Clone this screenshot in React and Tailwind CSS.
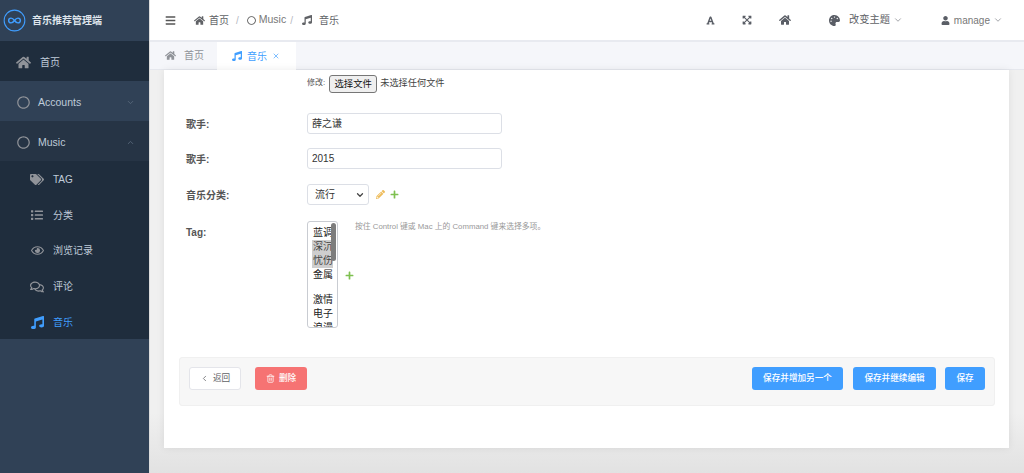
import React from "react";
import {
  FaBars,
  FaExpandArrowsAlt,
  FaFont,
  FaHome,
  FaList,
  FaMusic,
  FaPalette,
  FaPencilAlt,
  FaPlus,
  FaRegCircle,
  FaRegComments,
  FaRegEye,
  FaTags,
  FaUser,
} from "react-icons/fa";
import { ChevronDown, ChevronLeft, ChevronUp, Trash2, X } from "lucide-react";

const font = "font-['Liberation_Sans','Noto_Sans_CJK_SC',sans-serif]";

function Logo() {
  return (
    <svg viewBox="0 0 24 24" className="w-[23px] h-[23px]" fill="none">
      <circle cx="12" cy="12" r="10.8" stroke="#409eff" strokeWidth="1.1" />
      <path
        d="M12 12c-1.2-1.7-2.3-2.5-3.6-2.5a2.5 2.5 0 0 0 0 5c1.3 0 2.4-.8 3.6-2.5s2.3-2.5 3.6-2.5a2.5 2.5 0 0 1 0 5c-1.3 0-2.4-.8-3.6-2.5z"
        stroke="#409eff"
        strokeWidth="1.5"
      />
    </svg>
  );
}

function MenuRow({ icon, label, className, arrow }) {
  return (
    <div className={`h-10 flex items-center pt-[3px] pl-[16px] pr-[14px] ${className}`}>
      <span className="w-[14px] flex justify-center text-[#909399]">{icon}</span>
      <span className="ml-[8px] text-[10.5px] text-[#bfcbd9]">{label}</span>
      {arrow && <span className="ml-auto text-[#5f6f82]">{arrow}</span>}
    </div>
  );
}

function SubRow({ icon, label, active }) {
  return (
    <div className="h-[35.6px] flex items-center pt-[2px] pl-[30px]">
      <span className={`w-[14px] flex justify-center ${active ? "text-[#409eff]" : "text-[#909399]"}`}>
        {icon}
      </span>
      <span className={`ml-[9px] text-[10px] ${active ? "text-[#409eff]" : "text-[#bfcbd9]"}`}>{label}</span>
    </div>
  );
}

function Sidebar() {
  return (
    <div className="w-[149px] shrink-0 h-full bg-[#304156] flex flex-col">
      <div className="h-[41px] flex items-center pl-[3px]">
        <Logo />
        <span className="ml-[6px] text-[10px] font-bold text-[#dfe5ec]">音乐推荐管理端</span>
      </div>
      <div className="h-10 flex items-center pt-[2px] pl-[16px] bg-[#1f2d3d]">
        <FaHome className="text-[15px] text-[#909399]" />
        <span className="ml-[9px] text-[10px] text-[#bfcbd9]">首页</span>
      </div>
      <MenuRow
        icon={<FaRegCircle className="text-[13px]" />}
        label="Accounts"
        arrow={<ChevronDown size={9} />}
      />
      <MenuRow
        icon={<FaRegCircle className="text-[13px]" />}
        label="Music"
        className="bg-[#263445]"
        arrow={<ChevronUp size={9} />}
      />
      <div className="bg-[#1f2d3d] h-[178px]">
        <SubRow icon={<FaTags className="text-[15px]" />} label="TAG" />
        <SubRow icon={<FaList className="text-[12px]" />} label="分类" />
        <SubRow icon={<FaRegEye className="text-[13px]" />} label="浏览记录" />
        <SubRow icon={<FaRegComments className="text-[14px]" />} label="评论" />
        <SubRow icon={<FaMusic className="text-[13px]" />} label="音乐" active />
      </div>
    </div>
  );
}

function TopBar() {
  return (
    <div className="h-[42px] shrink-0 bg-white border-b-2 border-[#e8eaf0] flex items-center text-[10px] text-[#606266]">
      <FaBars className="ml-[15px] text-[11px] text-[#555]" />
      <FaHome className="ml-[18px] text-[11px] text-[#606266]" />
      <span className="ml-[4px]">首页</span>
      <span className="ml-[7px] text-[#b5b8bf]">/</span>
      <FaRegCircle className="ml-[8px] text-[9px] text-[#555]" />
      <span className="ml-[3px] text-[10.5px] text-[#777]">Music</span>
      <span className="ml-[4px] text-[#b5b8bf]">/</span>
      <FaMusic className="ml-[9px] text-[10px] text-[#606266]" />
      <span className="ml-[7px]">音乐</span>

      <FaFont className="ml-auto text-[9px] text-[#5a5e66]" />
      <FaExpandArrowsAlt className="ml-[27px] text-[10px] text-[#5a5e66]" />
      <FaHome className="ml-[27px] text-[12px] text-[#5a5e66]" />
      <FaPalette className="ml-[38px] text-[11px] text-[#5a5e66]" />
      <span className="ml-[9px] text-[10.2px]">改变主题</span>
      <ChevronDown size={10} className="ml-[3px] text-[#909399]" />
      <FaUser className="ml-[38px] text-[9px] text-[#5a5e66]" />
      <span className="ml-[4px] text-[#777]">manage</span>
      <ChevronDown size={10} className="ml-[3px] mr-[21px] text-[#909399]" />
    </div>
  );
}

function Tabs() {
  return (
    <div className="h-[28px] shrink-0 bg-[#f5f6fa] border-b border-[#e6e8ee] flex text-[10px]">
      <div className="w-[67px] flex items-center pl-[15px] text-[#909399]">
        <FaHome className="text-[11px]" />
        <span className="ml-[8px]">首页</span>
      </div>
      <div className="w-[79px] h-[28px] bg-white flex items-center pl-[15px] text-[#409eff]">
        <FaMusic className="text-[10px]" />
        <span className="ml-[5px]">音乐</span>
        <X size={8} className="ml-[5px]" />
      </div>
    </div>
  );
}

function Row({ label, className, children }) {
  return (
    <div className={`flex pl-[22px] ${className}`}>
      <label className="w-[121px] h-[21px] text-[10px] font-bold text-[#555] leading-[23px]">{label}</label>
      {children}
    </div>
  );
}

function TextBox({ value }) {
  return (
    <div className="w-[195px] h-[21px] bg-white border border-[#dcdfe6] rounded-[3px] pl-[4px] text-[10px] leading-[19px] text-[#333]">
      {value}
    </div>
  );
}

function TagOptions() {
  return (
    <div className="relative w-[31px] h-[107px] bg-white border border-[#c9ccd2] rounded-[3px] overflow-hidden text-[10px] text-[#222] pt-[1px]">
      <div className="pl-[5px] h-[14px] leading-[14px] mt-[3px]">蓝调</div>
      <div className="ml-[4px] w-[21px] bg-[#cecece] text-[#444]">
        <div className="pl-[1px] h-[14px] leading-[14px]">深沉</div>
        <div className="pl-[1px] h-[14px] leading-[14px]">忧伤</div>
      </div>
      <div className="pl-[5px] h-[14px] leading-[14px]">金属</div>
      <div className="pl-[5px] h-[14px] leading-[14px] mt-[11px]">激情</div>
      <div className="pl-[5px] h-[14px] leading-[14px]">电子</div>
      <div className="pl-[5px] h-[14px] leading-[14px]">浪漫</div>
      <div className="absolute right-[1px] top-[1px] w-[5px] h-[38px] rounded-full bg-[#7d7d7d]" />
    </div>
  );
}

function Actions() {
  return (
    <div className="h-[49px] ml-[15px] mr-[14px] mt-[29px] bg-[#f7f7f7] border border-[#f0f0f0] rounded-[3px] flex items-start pt-[9px] pl-[9px] pr-[9px] text-[8.6px]">
      <button className="w-[52px] h-[23px] bg-white border border-[#e4e5ea] rounded-[3px] flex items-center justify-center text-[#606266]">
        <ChevronLeft size={9} className="mr-[4px]" />
        返回
      </button>
      <button className="w-[52px] h-[23px] ml-[14px] bg-[#f56c6c]/95 rounded-[3px] flex items-center justify-center text-white font-medium">
        <Trash2 size={9} className="mr-[4px]" />
        删除
      </button>
      <button className="w-[91px] h-[23px] ml-auto bg-[#409eff] rounded-[3px] text-white font-medium">保存并增加另一个</button>
      <button className="w-[83px] h-[23px] ml-[10px] bg-[#409eff] rounded-[3px] text-white font-medium">保存并继续编辑</button>
      <button className="w-[40px] h-[23px] ml-[9px] bg-[#409eff] rounded-[3px] text-white font-medium">保存</button>
    </div>
  );
}

export default function App() {
  return (
    <div className={`flex w-[1024px] h-[473px] overflow-hidden bg-[#f0f0f0] ${font}`}>
      <Sidebar />
      <div className="w-px bg-[#dcdcdc] shrink-0" />
      <div className="flex-1 flex flex-col min-w-0">
        <TopBar />
        <Tabs />
        <div className="flex-1 bg-gradient-to-b from-[#f0f0f0] from-[85%] to-[#e2e2e2] pl-[14px] pr-[15px]">
          <div className="h-[378px] bg-white shadow-[0_0_8px_rgba(0,0,0,0.08)]">
            <div className="pt-[5px] pl-[143px] flex items-center h-[23px]">
              <span className="text-[8px] text-[#555] -mt-[2px]">修改:</span>
              <button className="ml-[4px] w-[48px] h-[18px] bg-[#efefef] border border-[#767676] rounded-[3px] text-[9.4px] text-[#111]">
                选择文件
              </button>
              <span className="ml-[3px] text-[9.2px] text-[#444]">未选择任何文件</span>
            </div>
            <Row label="歌手:" className="mt-[20px]">
              <TextBox value="薛之谦" />
            </Row>
            <Row label="歌手:" className="mt-[14px]">
              <TextBox value="2015" />
            </Row>
            <Row label="音乐分类:" className="mt-[15px] items-center">
              <div className="w-[62px] h-[21px] bg-white border border-[#dcdfe6] rounded-[3px] flex items-center pl-[7px] pr-[3px] text-[10px] text-[#333]">
                流行
                <ChevronDown size={10} strokeWidth={3} className="ml-auto text-[#444]" />
              </div>
              <FaPencilAlt className="ml-[7px] text-[9px] text-[#eebc5b]" />
              <FaPlus className="ml-[5px] text-[9px] text-[#7ec050]" />
            </Row>
            <Row label="Tag:" className="mt-[16px]">
              <TagOptions />
              <FaPlus className="ml-[7px] mt-[50px] text-[9px] text-[#7ec050]" />
              <span className="ml-[1px] text-[7.8px] leading-[12px] text-[#999]">
                按住 Control 键或 Mac 上的 Command 键来选择多项。
              </span>
            </Row>
            <Actions />
          </div>
        </div>
      </div>
    </div>
  );
}
